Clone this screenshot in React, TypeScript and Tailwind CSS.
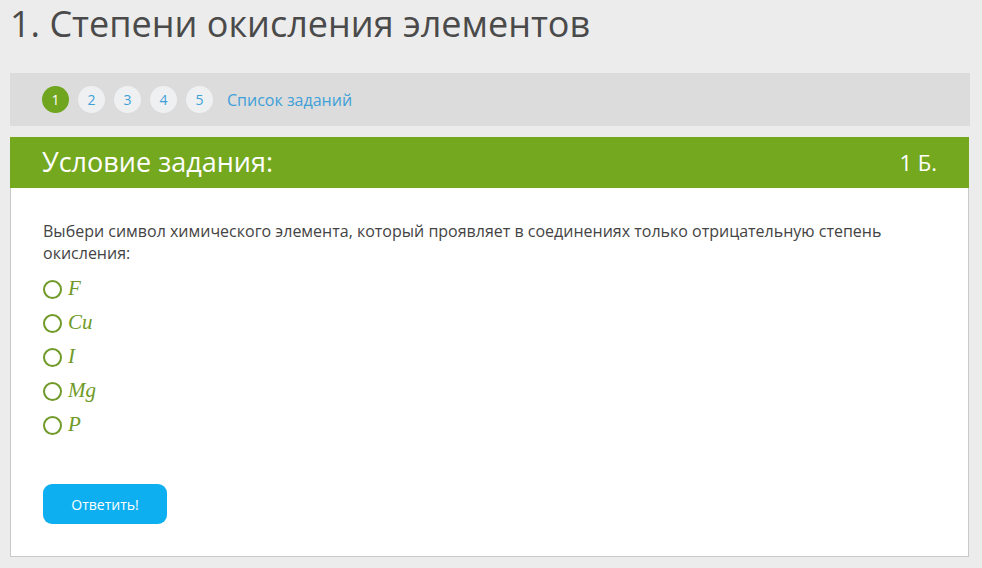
import React from 'react';

const options = ['F', 'Cu', 'I', 'Mg', 'P'];

function Radio() {
    return <span className="inline-block size-[19px] rounded-full border-2 border-[#6f9a28] shrink-0" />;
}

export default function App() {
    return (
        <div className="min-h-[568px] bg-[#ececec] px-[10px] pb-3 font-['Open_Sans','Noto_Sans',sans-serif]">
            <h1 className="pt-[2px] text-[36px] leading-[44px] text-[#4a4a4a]">1. Степени окисления элементов</h1>

            <div className="mt-[27px] mr-[2px] h-[53px] bg-[#dcdcdc] flex items-center pl-[32px] gap-[9px]">
                <span className="size-[27px] rounded-full bg-[#6fa51f] text-white text-[14px] flex items-center justify-center">1</span>
                {[2, 3, 4, 5].map(n => (
                    <span key={n} className="size-[27px] rounded-full bg-[#eef0f2] text-[#3fa0d8] text-[14px] flex items-center justify-center">
                        {n}
                    </span>
                ))}
                <span className="ml-[5px] text-[16px] text-[#3fa0d8]">Список заданий</span>
            </div>

            <div className="mt-[11px] mr-[3px] border border-[#c9c9c9] border-t-0 bg-white">
                <div className="h-[51px] bg-[#74a81f] flex items-center justify-between pl-[32px] pr-[32px] -mx-px">
                    <span className="text-[27px] text-white">Условие задания:</span>
                    <span className="text-[22px] text-white">1 Б.</span>
                </div>
                <div className="pl-[32px] pr-[30px] pt-[32px] pb-[32px]">
                    <p className="text-[16px] leading-[22px] text-[#444]">
                        Выбери символ химического элемента, который проявляет в соединениях только отрицательную степень окисления:
                    </p>
                    <div className="mt-[15px] flex flex-col gap-[14px]">
                        {options.map(o => (
                            <label key={o} className="flex items-center gap-[6px] h-[20px]">
                                <Radio />
                                <span className="font-['Liberation_Serif',serif] italic text-[21px] text-[#6f9a28]">{o}</span>
                            </label>
                        ))}
                    </div>
                    <button className="mt-[49px] w-[124px] h-[40px] rounded-[9px] bg-[#0eaff0] text-white text-[14px]">
                        Ответить!
                    </button>
                </div>
            </div>
        </div>
    );
}
